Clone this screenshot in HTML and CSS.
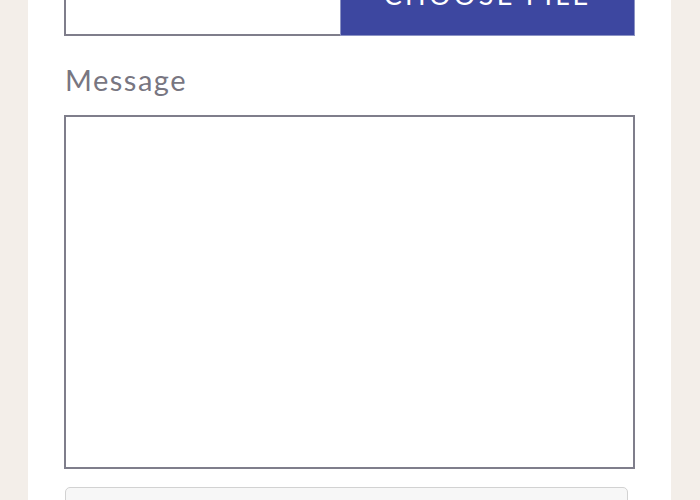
FILE: index.html
```html
<!DOCTYPE html>
<html lang="en">
<head>
  <meta charset="UTF-8">
  <meta name="viewport" content="width=device-width, initial-scale=1.0">
  <title>Contact</title>
  <link rel="stylesheet" href="styles.css">
</head>
<body>

<div class="card">
  <div class="file-group">
    <div class="file-name"></div>
    <button class="file-button">Choose File</button>
  </div>

  <div class="form-group">
    <label for="message">Message</label>
    <textarea id="message"></textarea>
  </div>

  <div class="submit-box"></div>
</div>

</body>
</html>
```

FILE: styles.css
```css
body {
  margin: 0;
  font-family: Lato, "Open Sans", sans-serif;
  background-color: #f3eee9;
  height: 100vh;
  overflow: hidden;
}
.card {
  margin: -30px 29px 0 28px;
  padding: 0 36px;
  background-color: #fff;
  height: 600px;
}
.file-group {
  display: flex;
  height: 66px;
  box-sizing: border-box;
  border: 2px solid #7f7e8b;
  border-top: none;
}
.file-name {
  flex: 1;
  background-color: #fff;
}
.file-button {
  width: 295px;
  margin: 0 -2px -2px 0;
  padding: 0 0 17px;
  background-color: #3d47a0;
  border: 1px solid #8c93c4;
  color: #fff;
  font-family: inherit;
  font-size: 27px;
  letter-spacing: 3.3px;
  text-transform: uppercase;
}
.form-group {
  margin-top: 26px;
}
label {
  display: block;
  margin: 0 0 18px 1px;
  font-size: 29px;
  letter-spacing: 1.5px;
  color: #787681;
}
textarea {
  display: block;
  width: 100%;
  height: 354px;
  box-sizing: border-box;
  border: 2px solid #7f7e8b;
  border-radius: 0;
  resize: none;
}
.submit-box {
  margin: 18px 7px 0 1px;
  height: 40px;
  background-color: #f7f7f7;
  border: 1px solid #d2d2d2;
  border-radius: 5px;
}
```
